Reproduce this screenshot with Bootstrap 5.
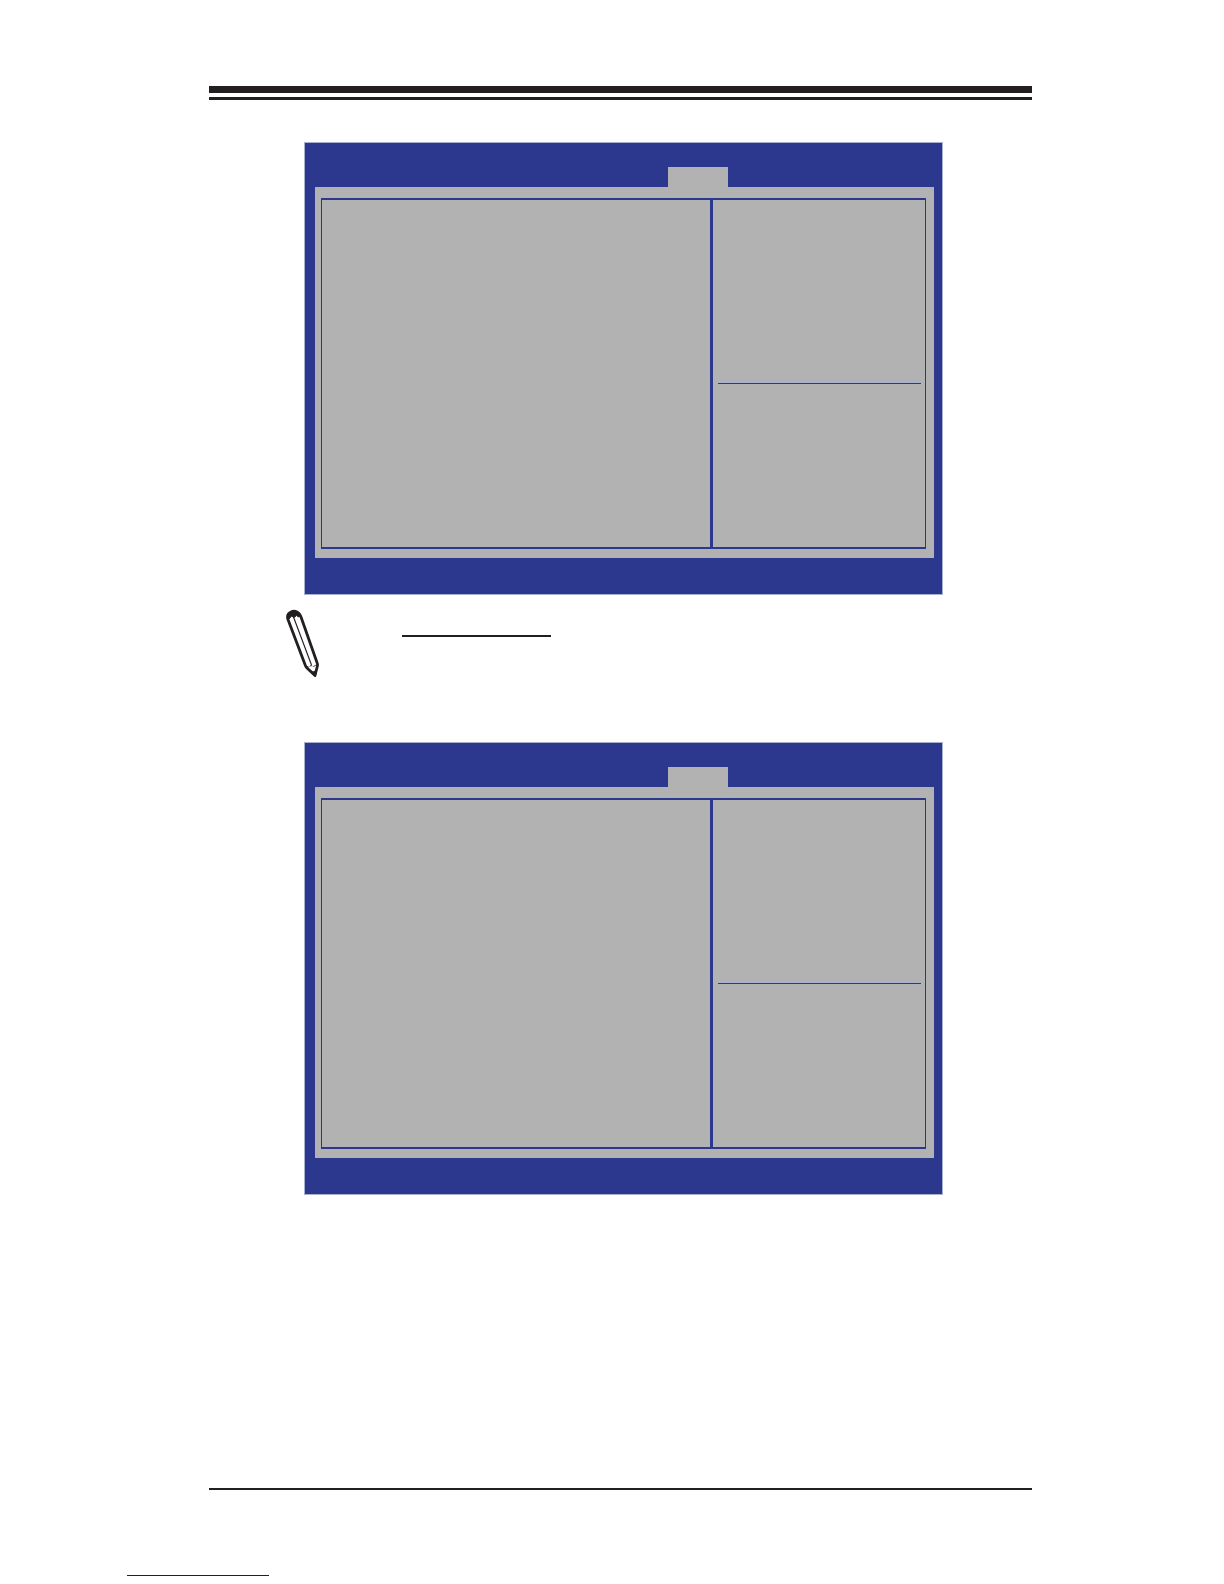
<!DOCTYPE html>
<html lang="en">
<head>
<meta charset="utf-8">
<meta name="viewport" content="width=device-width, initial-scale=1">
<title>Manual page</title>
<link href="https://cdn.jsdelivr.net/npm/bootstrap@5.3.0/dist/css/bootstrap.min.css" rel="stylesheet">
<style>
:root { --ink: #231f20; --bios-blue: #2b388d; --bios-gray: #b2b2b2; --halo: #a9b1d3; }
body { background: #fff; font-family: "Liberation Sans", Arial, sans-serif; }
.sheet { padding: 86px 192px 0 209px; }
.rule-head { height: 14px; border-top: 7px solid var(--ink); border-bottom: 3px solid var(--ink); margin-bottom: 42px; }
.bios { margin: 0 89px 0 95px; padding: 0 8px 36px 10px; background: var(--bios-blue); border: 1px solid var(--halo); }
.bios-bar { height: 44px; }
.bios-tab { width: 60px; height: 20px; margin-left: 57%; background: var(--bios-gray); }
.bios-body { padding: 11px 8px 9px 6px; background: var(--bios-gray); }
.bios-frame { min-height: 351px; border: solid var(--bios-blue); border-width: 2px 1px; }
.bios-help { width: 215px; padding: 0 4px 0 5px; border-left: 3px solid var(--bios-blue); }
.bios-help-top { height: 182px; }
.bios-line { height: 2px; border: solid; border-width: 1px 0; border-color: var(--halo) transparent var(--bios-blue); }
.note-row { min-height: 147px; padding: 14px 0 0 77px; }
.note-line { width: 149px; height: 2px; margin: 26px 0 0 82px; background: var(--ink); }
.rule-foot { height: 2px; margin: 0 192px 0 209px; background: var(--ink); }
.site-link { width: 142px; height: 1px; margin: 85px 0 8px 127px; background: #17137f; }
</style>
<script src="https://cdn.jsdelivr.net/npm/bootstrap@5.3.0/dist/js/bootstrap.bundle.min.js"></script>
</head>
<body class="d-flex flex-column min-vh-100">
<main class="sheet">
  <header class="rule-head"></header>

  <section class="bios" aria-label="Setup screen">
    <div class="bios-bar d-flex align-items-end"><div class="bios-tab"></div></div>
    <div class="bios-body">
      <div class="bios-frame d-flex">
        <div class="flex-grow-1"></div>
        <aside class="bios-help flex-shrink-0">
          <div class="bios-help-top"></div>
          <div class="bios-line"></div>
        </aside>
      </div>
    </div>
  </section>

  <div class="note-row d-flex align-items-start">
    <svg class="flex-shrink-0" width="34" height="70" viewBox="6 19 34 70" fill="none" stroke="#231f20" aria-hidden="true">
      <path d="M8 29.500 25 74.500Q25.500 76.500 27 78L35 85.500 37.400 76Q37.800 74.500 37 72.500L21 27C19 21.500 14.500 20 11 22 8 23.500 7 26.500 8 29.500Z" fill="#fff" stroke-width="2.800" stroke-linejoin="round"/>
      <path d="M8 29C6.500 23 11 20.500 16 21.500L20 25.500 18.500 27 16.500 25.500 14 27.500 11.500 26 9 29Z" fill="#231f20"/>
      <path d="M13.500 27 31.500 75" stroke-width="1.100"/>
      <path d="M26 76 28.500 77 31 75.500 33.500 76.500 37 74.500" stroke-width=".9" stroke-dasharray="3 1"/>
      <path d="M29.500 80.500 33 82 36.500 80.500 35.300 86.500Z" fill="#231f20"/>
    </svg>
    <div class="note-line"></div>
  </div>

  <section class="bios" aria-label="Setup screen">
    <div class="bios-bar d-flex align-items-end"><div class="bios-tab"></div></div>
    <div class="bios-body">
      <div class="bios-frame d-flex">
        <div class="flex-grow-1"></div>
        <aside class="bios-help flex-shrink-0">
          <div class="bios-help-top"></div>
          <div class="bios-line"></div>
        </aside>
      </div>
    </div>
  </section>
</main>
<footer class="mt-auto">
  <div class="rule-foot"></div>
  <div class="site-link"></div>
</footer>
</body>
</html>
